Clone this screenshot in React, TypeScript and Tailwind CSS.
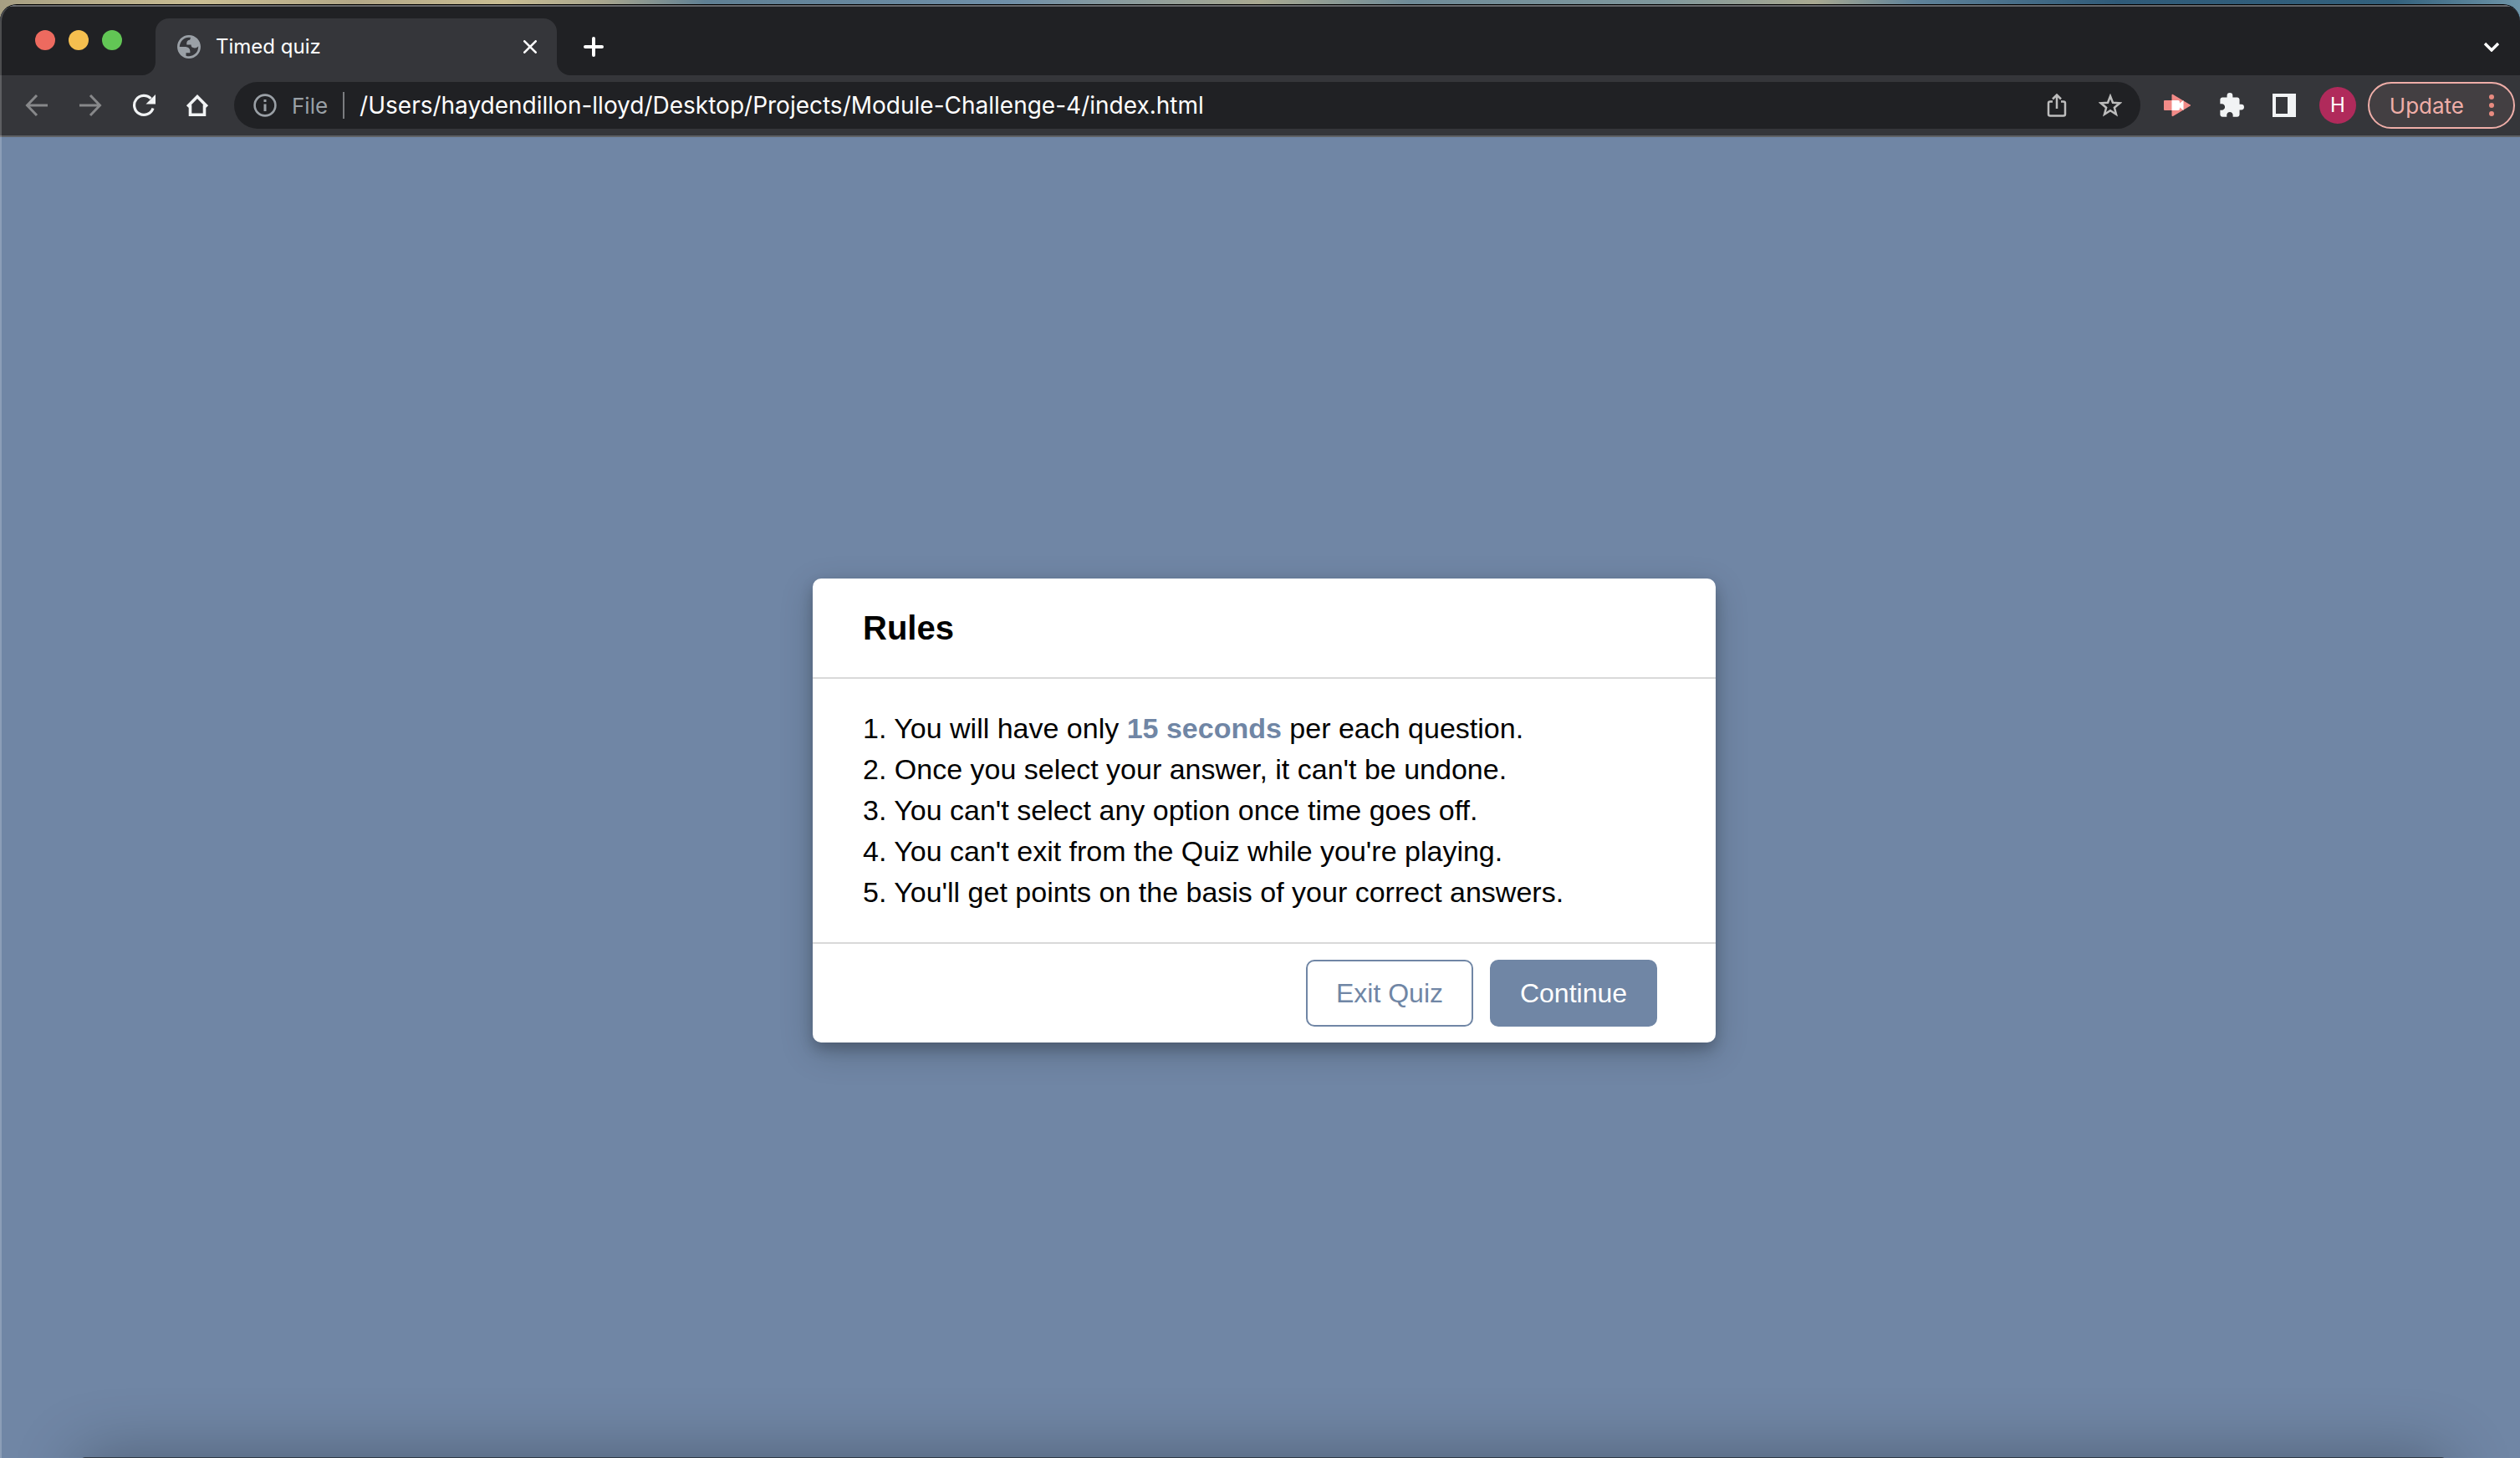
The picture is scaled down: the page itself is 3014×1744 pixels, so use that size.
import React from "react";

const rules: React.ReactNode[] = [
  <>You will have only <span className="font-semibold text-[#7086a5]">15 seconds</span> per each question.</>,
  "Once you select your answer, it can't be undone.",
  "You can't select any option once time goes off.",
  "You can't exit from the Quiz while you're playing.",
  "You'll get points on the basis of your correct answers.",
];

function Globe() {
  return (
    <svg viewBox="2 2 20 20" className="size-7" fill="#9aa0a6" fillRule="evenodd" aria-hidden="true">
      <path d="M12 2c5.523 0 10 4.477 10 10s-4.477 10-10 10S2 17.523 2 12 6.477 2 12 2zM4 12h4.400c3.407.022 4.922 1.730 4.543 5.127H9.488v2.470a8.004 8.004 0 0 0 10.498-8.083C19.327 12.504 18.332 13 17 13c-2.137 0-3.206-.916-3.206-2.750h-3.748c-.274-2.728.683-4.092 2.870-4.092 0-.975.327-1.597.811-1.970A8.004 8.004 0 0 0 4 12z" />
    </svg>
  );
}

function Toolbar() {
  return (
    <div className="flex h-[72px] items-center bg-[#35363a] pr-1.5 pl-[30px]">
      <div className="flex items-center gap-9">
        <button aria-label="Back" className="size-7">
          <svg viewBox="0 0 28 28" fill="none" stroke="#87888a" strokeWidth="3">
            <path d="M27 14H3M14 2 2.500 14 14 26" />
          </svg>
        </button>
        <button aria-label="Forward" className="size-7">
          <svg viewBox="0 0 28 28" fill="none" stroke="#87888a" strokeWidth="3">
            <path d="M1 14h24M14 2l11.500 12L14 26" />
          </svg>
        </button>
        <button aria-label="Reload" className="size-7">
          <svg viewBox="0 0 28 28">
            <path d="M25 17.500A11.500 11.500 0 1 1 22.500 6" fill="none" stroke="#f1f3f4" strokeWidth="3.200" />
            <path d="M28 1v11.500H16.500z" fill="#f1f3f4" />
          </svg>
        </button>
        <button aria-label="Home" className="size-7">
          <svg viewBox="0 0 28 28" fill="none" stroke="#f1f3f4" strokeWidth="3.600">
            <path d="M2.200 15.500 14 3.500l11.800 12M5.500 13.500v11.700h17V13.500" />
          </svg>
        </button>
      </div>
      <div className="ml-[30px] flex h-14 min-w-0 flex-1 items-center rounded-full bg-[#202124] pr-[22px] pl-[23px]">
        <button aria-label="Site information" className="flex items-center gap-[18px] text-[26px] text-[#9aa0a6]">
          <svg viewBox="0 0 28 28" className="size-7">
            <circle cx="14" cy="14" r="12.400" fill="none" stroke="#9aa0a6" strokeWidth="2.600" />
            <path d="M12.500 7h3v3h-3zM12.500 12.500h3V21h-3z" fill="#9aa0a6" />
          </svg>
          File
        </button>
        <span className="mr-[14px] ml-[18px] h-8 w-0.5 bg-[#7b7d80]" />
        <input
          aria-label="Address"
          defaultValue="/Users/haydendillon-lloyd/Desktop/Projects/Module-Challenge-4/index.html"
          className="h-full min-w-0 flex-1 bg-transparent pl-1 text-[28px] text-white outline-none"
        />
        <div className="flex items-center gap-9">
          <button aria-label="Share" className="h-7 w-7">
            <svg viewBox="0 0 28 28" fill="none" stroke="#bdbdbd" strokeWidth="2.500">
              <path d="M9 9.500H6a2 2 0 0 0-2 2v13a2 2 0 0 0 2 2h16a2 2 0 0 0 2-2v-13a2 2 0 0 0-2-2h-3M14 18V2M9 6.500l5-5 5 5" />
            </svg>
          </button>
          <button aria-label="Bookmark" className="size-7">
            <svg viewBox="0 0 28 28" fill="none" stroke="#bdbdbd" strokeWidth="2.500">
              <path d="m14 3 3 7.700 8.300.6-6.400 5.400 2.100 8.100-7-4.500-7 4.500 2.100-8.100-6.400-5.400 8.300-.6z" />
            </svg>
          </button>
        </div>
      </div>
      <div className="ml-7 flex items-center gap-[34px]">
        <button aria-label="Screen recorder" className="h-7 w-8">
          <svg viewBox="0 0 32 28">
            <path d="M1 8h9v12H1a1 1 0 0 1-1-1V9a1 1 0 0 1 1-1z" fill="#f28b88" />
            <path d="M9.500 1.500c0-.8.800-1 1.500-.6L31 13a1 1 0 0 1 0 2L11 27c-.8.400-1.500 0-1.500-.700z" fill="#f28b88" />
            <path d="M9.500 8H17a2 2 0 0 1 2 2v1.500L23.500 8v12L19 16.500V18a2 2 0 0 1-2 2H9.500z" fill="#fff" />
          </svg>
        </button>
        <button aria-label="Extensions" className="size-[30px]">
          <svg viewBox="1 1 22 22" fill="#f1f3f4">
            <path d="M20.500 11H19V7c0-1.100-.9-2-2-2h-4V3.500a2.500 2.500 0 0 0-5 0V5H4c-1.100 0-2 .9-2 2v3.800h1.500c1.500 0 2.700 1.200 2.700 2.700S5 16.200 3.500 16.200H2V20c0 1.100.9 2 2 2h3.800v-1.500c0-1.500 1.200-2.700 2.700-2.700s2.700 1.200 2.700 2.700V22H17c1.100 0 2-.9 2-2v-4h1.500a2.500 2.500 0 0 0 0-5z" />
          </svg>
        </button>
        <button aria-label="Side panel" className="size-7">
          <svg viewBox="0 0 28 28">
            <path d="M0 0h28v28H0zM4 4v20h14V4z" fill="#f1f3f4" fillRule="evenodd" />
          </svg>
        </button>
      </div>
      <button aria-label="Profile" className="ml-7 size-11 rounded-full bg-[#b02a5b] text-[24px] text-white">
        H
      </button>
      <button className="ml-3.5 flex h-14 items-center gap-[30px] rounded-full border-2 border-[#efaea8] bg-[#433f42] pr-[23px] pl-6 text-[26px] text-[#efaea8]">
        Update
        <svg viewBox="0 0 6 26" className="h-[26px] w-1.5" fill="#e88b80" aria-hidden="true">
          <circle cx="3" cy="3" r="3" />
          <circle cx="3" cy="13" r="3" />
          <circle cx="3" cy="23" r="3" />
        </svg>
      </button>
    </div>
  );
}

function TabStrip() {
  return (
    <div className="flex h-[82px] bg-[#202124]">
      <div className="flex gap-4 pt-7 pr-10 pl-[42px]">
        <button aria-label="Close window" className="size-6 rounded-full bg-[#ed6a5f]" />
        <button aria-label="Minimize window" className="size-6 rounded-full bg-[#f5bf4f]" />
        <button aria-label="Zoom window" className="size-6 rounded-full bg-[#62c655]" />
      </div>
      <div className="relative mt-3.5 flex w-[480px] items-center rounded-t-2xl bg-[#35363a] pr-6 pl-[26px]">
        <svg viewBox="0 0 16 16" className="absolute bottom-0 -left-4 size-4" aria-hidden="true">
          <path d="M16 0v16H0A16 16 0 0 0 16 0z" fill="#35363a" />
        </svg>
        <svg viewBox="0 0 16 16" className="absolute -right-4 bottom-0 size-4" aria-hidden="true">
          <path d="M0 0v16h16A16 16 0 0 1 0 0z" fill="#35363a" />
        </svg>
        <Globe />
        <span className="ml-[18px] flex-1 text-[24px] text-white">Timed quiz</span>
        <button aria-label="Close tab" className="size-4">
          <svg viewBox="0 0 16 16" stroke="#fff" strokeWidth="2.600" strokeLinecap="round">
            <path d="m1.300 1.300 13.400 13.400M14.700 1.300 1.300 14.700" />
          </svg>
        </button>
      </div>
      <button aria-label="New tab" className="mt-9 ml-8 size-6">
        <svg viewBox="0 0 24 24" stroke="#fff" strokeWidth="4" strokeLinecap="round">
          <path d="M12 2v20M2 12h20" />
        </svg>
      </button>
      <button aria-label="Search tabs" className="mt-[42px] mr-6 ml-auto h-3 w-5">
        <svg viewBox="0 0 20 12" fill="none" stroke="#fff" strokeWidth="3.400">
          <path d="m2 2 8 8 8-8" />
        </svg>
      </button>
    </div>
  );
}

export default function App() {
  return (
    <div className="flex h-screen flex-col overflow-hidden bg-[linear-gradient(90deg,#a79f83,#c9bd93_8%,#b3a888_14%,#c9bd93_20%,#a7a58e_24%,#5f7f93_28%,#6f8fa8_40%,#a9a991_50%,#6f8b98_56%,#7f979c_66%,#a9a991_72%,#5f8299_76%,#2f5a78_84%,#32607c_95%,#6f95a8)] pt-[5px] font-[Inter,sans-serif]">
      <div className="relative flex flex-1 flex-col overflow-hidden rounded-t-[20px] border-t border-black bg-[#7086a5]">
        <div className="border-t-2 border-[#66676a]">
          <TabStrip />
          <Toolbar />
        </div>
        <main className="flex flex-1 items-center justify-center border-t-2 border-[#5f6165] pt-[30px] pl-[10px] font-['Liberation_Sans',Arial,sans-serif] text-black">
          <section className="w-[1080px] rounded-[10px] bg-white shadow-[0_8px_16px_0_rgba(0,0,0,0.2),0_12px_40px_0_rgba(0,0,0,0.19)]">
            <h1 className="border-b-2 border-[#d9d9d9] px-[60px] py-[34px] text-[40px] leading-[50px] font-semibold">Rules</h1>
            <ol className="px-[60px] py-[35px] text-[34px] leading-[49px]">
              {rules.map((rule, i) => (
                <li key={i}>
                  {i + 1}. {rule}
                </li>
              ))}
            </ol>
            <footer className="flex justify-end gap-5 border-t-2 border-[#d9d9d9] py-[19px] pr-[70px] text-[32px]">
              <button className="h-20 w-[200px] rounded-[10px] border-2 border-[#7086a5] text-[#7086a5]">Exit Quiz</button>
              <button className="h-20 w-[200px] rounded-[10px] border-2 border-[#7086a5] bg-[#7086a5] text-white">Continue</button>
            </footer>
          </section>
        </main>
        <div className="pointer-events-none absolute right-[88px] -bottom-[99px] left-[96px] h-[100px] rounded-t-md bg-[#2f3a47] shadow-[0_0_80px_rgba(0,0,0,0.3)]" />
        <div className="pointer-events-none absolute inset-0 rounded-tl-[20px] border-l-2 border-white/20" />
      </div>
    </div>
  );
}
